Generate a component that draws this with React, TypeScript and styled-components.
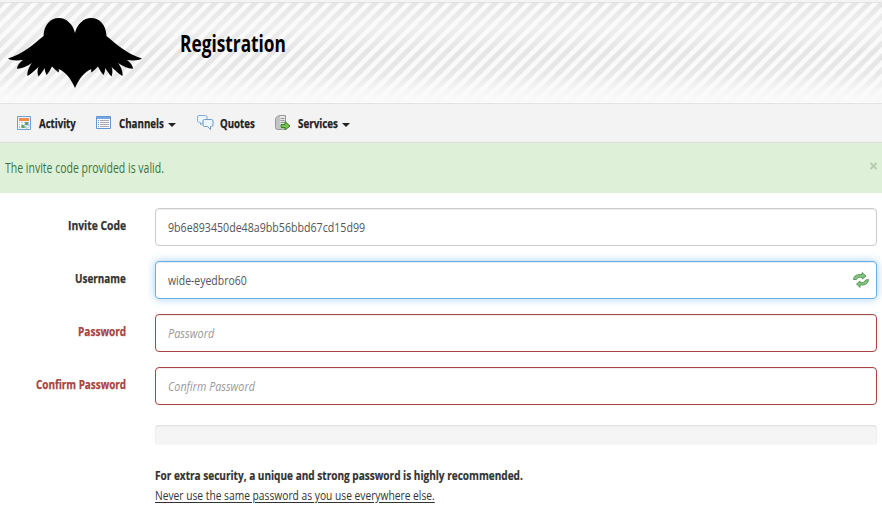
import React, { useLayoutEffect, useRef, useState } from "react";
import styled, { createGlobalStyle } from "styled-components";

const Global = createGlobalStyle`
  * { box-sizing: border-box; }
  body { margin: 0; background: #fff; color: #333; font: 14px/20px "Open Sans", "Noto Sans", sans-serif; overflow: hidden; }
`;

const Fitted = styled.span<{ $width: number }>`
  display: inline-block;
  width: ${(p) => p.$width}px;
  white-space: nowrap;
  flex: none;
  text-align: left;
`;
const Glyphs = styled.span`
  display: inline-block;
  transform-origin: 0 50%;
`;

/* Condenses a line of text to the given width. */
function Condensed({ width, children }: { width: number; children: string }) {
  const ref = useRef<HTMLSpanElement>(null);
  const [scale, setScale] = useState(1);
  useLayoutEffect(() => {
    if (ref.current) setScale(width / ref.current.offsetWidth);
  }, [width]);
  return (
    <Fitted $width={width}>
      <Glyphs ref={ref} style={{ transform: `scaleX(${scale})` }}>{children}</Glyphs>
    </Fitted>
  );
}

const Page = styled.div`
  height: 508px;
  overflow: hidden;
`;
const Header = styled.header`
  height: 104px;
  display: flex;
  align-items: flex-start;
  border-top: 2px solid #f4f4f4;
  border-bottom: 1px solid #e3e3e3;
  padding-left: 7px;
  background:
    linear-gradient(#e2e2e2 0 1px, transparent 1px),
    linear-gradient(rgba(250,250,250,0) 0, rgba(250,250,250,.45) 25px, rgba(250,250,250,0) 50px, rgba(250,250,250,.15) 72px, rgba(250,250,250,.75) 88px, #fafafa 101px),
    repeating-linear-gradient(135deg, #e5e5e5 0 4.2px, #fafafa 4.9px 8.8px, #e5e5e5 9.43px);
`;
const Logo = styled.svg`
  width: 136px;
  height: 72px;
  margin-top: 15px;
  flex: none;
`;
const Title = styled.h1`
  margin: 24px 0 0 37px;
  color: #000;
  font-size: 23px;
  line-height: 34px;
  font-weight: 700;
`;
const Nav = styled.nav`
  height: 39px;
  display: flex;
  align-items: center;
  padding-left: 16px;
  background: #f3f3f3;
  border-bottom: 1px solid #dcdcdc;
`;
const NavItem = styled.a<{ $gap: number; $iconGap: number }>`
  display: flex;
  align-items: center;
  height: 38px;
  margin-right: ${(p) => p.$gap}px;
  color: #222;
  font-weight: 700;
  font-size: 13px;
  -webkit-text-stroke: .25px currentColor;
  svg { flex: none; margin-right: ${(p) => p.$iconGap}px; }
`;
const Caret = styled.i`
  margin: 3px 0 0 4px;
  border: 4px solid transparent;
  border-top-color: #222;
  border-bottom: 0;
`;
const Alert = styled.div`
  height: 50px;
  display: flex;
  justify-content: space-between;
  padding: 15px 4px 0 5px;
  background: #dff0d8;
  color: #3c763d;
`;
const Close = styled.svg`
  width: 9px;
  height: 8px;
  margin-top: 4px;
`;
const Form = styled.form`
  padding: 15px 5px 0 0;
  display: grid;
  grid-template-columns: 126px 1fr;
  column-gap: 29px;
  row-gap: 15px;
`;
const Label = styled.label<{ $error?: boolean }>`
  display: flex;
  justify-content: flex-end;
  padding-top: 7px;
  font-weight: 700;
  font-size: 13px;
  -webkit-text-stroke: .25px currentColor;
  color: ${(p) => (p.$error ? "#a94442" : "#333")};
`;
type State = "normal" | "focus" | "error";
const borders = { normal: "#ccc", focus: "#66afe9", error: "#a94442" };
const Field = styled.div<{ $state: State }>`
  height: 38px;
  display: flex;
  align-items: center;
  justify-content: space-between;
  padding: 0 7px 0 12px;
  border: 1px solid ${(p) => borders[p.$state]};
  border-radius: 4px;
  box-shadow: inset 0 1px 1px rgba(0,0,0,.075)${(p) => (p.$state === "focus" ? ", 0 0 8px rgba(102,175,233,.6)" : "")};
  background: #fff;
  color: ${(p) => (p.$state === "error" ? "#999" : "#555")};
  font-size: 13.5px;
  font-style: ${(p) => (p.$state === "error" ? "italic" : "normal")};
`;
const Strength = styled.div`
  grid-column: 2;
  height: 20px;
  margin-top: 5px;
  border-radius: 4px;
  background: #f5f5f5;
  box-shadow: inset 0 1px 2px rgba(0,0,0,.1);
`;
const Advice = styled.div`
  grid-column: 2;
  display: flex;
  flex-direction: column;
  margin-top: 5px;
`;
const Strong = styled.strong`
  height: 20px;
  font-size: 13px;
  -webkit-text-stroke: .2px currentColor;
`;
const Underlined = styled.span`
  height: 20px;
  font-size: 13.5px;
  text-decoration: underline;
  text-underline-offset: 2px;
  span { text-decoration: inherit; }
`;

const Wings = () => (
  <Logo viewBox="7 17 136 72">
    <path d="M75 33C73 24 66 18 59 18C50 18 44 25 43.5 36C34 44 23 54 8 58.5C12 61 18 60.500 23 60C19 63 17 66 17 68.800C22 69 27 66 32 63C28 68 27 73 27.500 76C31 74 35 70 38.500 67C37 70 37.500 74 38.500 76.500C41 74 43 70.500 45 68C44.500 70 45.500 73 46.500 75C48.500 73 50.500 69.500 52 66.500C54 68.500 56 70.500 58.500 72.500C59 71 59 70 58.500 69C66 72 71 79 75 88C79 79 84 72 91.500 69C91 70 91 71 91.500 72.500C94 70.500 96 68.500 98 66.500C99.500 69.500 101.500 73 103.500 75C104.500 73 105.500 70 105 68C107 70.500 109 74 111.500 76.500C112.500 74 113 70 111.500 67C115 70 119 74 122.500 76C123 73 122 68 118 63C123 66 128 69 133 68.800C133 66 131 63 127 60C132 60.500 138 61 142 58.500C127 54 116 44 106.500 36C106 25 100 18 91 18C84 18 77 24 75 33Z" />
  </Logo>
);
const CalendarIcon = () => (
  <svg width="16" height="16" viewBox="0 0 16 16">
    <path fill="#eaf3fc" stroke="#6fa0d8" d="M1.500 1.500h13v13h-13z" />
    <path fill="#f58b4c" d="M3 3h10v3H3z" />
    <path fill="#a9c8e9" d="M3 7h10v6H3z" />
    <path stroke="#fff" d="M3 8.500h9M3 10.500h9M4.500 7v6M7.500 7v6M10.500 7v6" />
    <path fill="#62a955" d="M9 7h3v3H9zM5.500 10h3v3h-3z" />
    <path fill="#fff" stroke="#a8c9eb" strokeWidth=".7" d="M10.500 14v-3.500H14z" />
  </svg>
);
const ListIcon = () => (
  <svg width="16" height="16" viewBox="0 0 16 16">
    <path fill="#f8fbff" stroke="#6595d2" d="M.500 1.500h14v12H.500z" />
    <path fill="#76a9e1" d="M1 2h13v2H1z" />
    <path stroke="#6595d2" d="M2 5.500h1M2 7.500h1M2 9.500h1M2 11.500h1" />
    <path stroke="#aaa" d="M4 5.500h9M4 7.500h9M4 9.500h9M4 11.500h9" />
  </svg>
);
const QuotesIcon = () => (
  <svg width="17" height="16" viewBox="0 0 17 16" fill="#edf5fd" strokeLinejoin="round">
    <path stroke="#88afd8" d="M2 .500h6.500q1.500 0 1.500 1.500v4q0 1.500-1.500 1.500H5.500L3.500 10V7.500Q.500 7.500.500 6V2Q.500.500 2 .500Z" />
    <path stroke="#6c99ce" d="M7.500 4.500h7q1.500 0 1.500 1.500v4q0 1.500-1.500 1.500h-1v3l-3-3h-3Q6 11.500 6 10V6Q6 4.500 7.500 4.500Z" />
  </svg>
);
const ServerIcon = () => (
  <svg width="16" height="16" viewBox="0 0 16 16">
    <path fill="#c4c4c4" stroke="#999" strokeLinejoin="round" d="M.500 3.500Q2 .500 5 .500h5.500v13l-3 1h-5q-2 0-2-2z" />
    <path fill="#e6e6e6" d="M5 1h5v12H5z" />
    <path stroke="#999" d="M5.500 3.500h4M5.500 5.500h4M5.500 7.500h4" />
    <path fill="#77c34f" stroke="#397f29" d="M6 9.500h4V6.500L15 11l-5 4v-2.500H6z" />
  </svg>
);
const RefreshIcon = () => (
  <svg width="16" height="16" viewBox="0 0 16 16" fill="#82c57e" stroke="#377f3b" strokeWidth=".7" strokeLinejoin="round">
    <path d="M.500 7.500C.500 4 4 2 9 2.500V.500L13 4 9.500 7V5.500C6 5 4 5.500 3.500 7.500Z" />
    <path d="M15.500 7.500C15.500 11.500 12 13.500 7 13V15.500L3.500 12 7 9V10.500C10 11 12 10 12.500 8Z" />
  </svg>
);

export default function App() {
  return (
    <Page>
      <Global />
      <Header>
        <Wings />
        <Title><Condensed width={106}>Registration</Condensed></Title>
      </Header>
      <Nav>
        <NavItem $gap={20} $iconGap={7}><CalendarIcon /><Condensed width={37}>Activity</Condensed></NavItem>
        <NavItem $gap={21} $iconGap={7}><ListIcon /><Condensed width={45}>Channels</Condensed><Caret /></NavItem>
        <NavItem $gap={20} $iconGap={6}><QuotesIcon /><Condensed width={35}>Quotes</Condensed></NavItem>
        <NavItem $gap={0} $iconGap={7}><ServerIcon /><Condensed width={40}>Services</Condensed><Caret /></NavItem>
      </Nav>
      <Alert>
        <Condensed width={159}>The invite code provided is valid.</Condensed>
        <Close viewBox="0 0 9 8"><path d="M1.500 1l6 6M7.500 1l-6 6" stroke="#b5ccaf" strokeWidth="1.900" /></Close>
      </Alert>
      <Form>
        <Label><Condensed width={58}>Invite Code</Condensed></Label>
        <Field $state="normal"><Condensed width={197}>9b6e893450de48a9bb56bbd67cd15d99</Condensed></Field>
        <Label><Condensed width={51}>Username</Condensed></Label>
        <Field $state="focus"><Condensed width={79}>wide-eyedbro60</Condensed><RefreshIcon /></Field>
        <Label $error><Condensed width={48}>Password</Condensed></Label>
        <Field $state="error"><Condensed width={46}>Password</Condensed></Field>
        <Label $error><Condensed width={90}>Confirm Password</Condensed></Label>
        <Field $state="error"><Condensed width={87}>Confirm Password</Condensed></Field>
        <Strength />
        <Advice>
          <Strong><Condensed width={368}>For extra security, a unique and strong password is highly recommended.</Condensed></Strong>
          <Underlined><Condensed width={280}>Never use the same password as you use everywhere else.</Condensed></Underlined>
        </Advice>
      </Form>
    </Page>
  );
}
